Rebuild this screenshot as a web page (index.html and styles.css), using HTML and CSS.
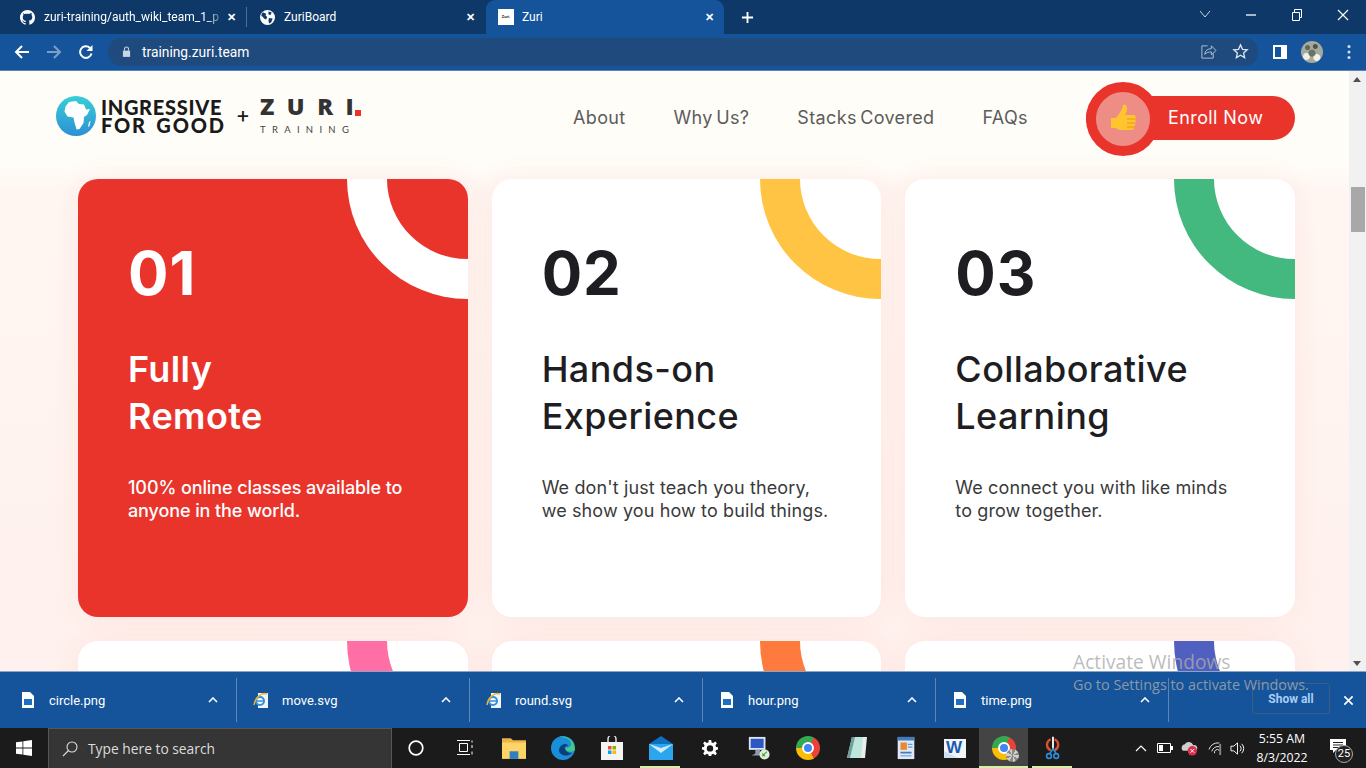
FILE: index.html
```html
<!DOCTYPE html>
<html lang="en">
<head>
    <meta charset="UTF-8">
    <meta name="viewport" content="width=device-width, initial-scale=1.0">
    <title>Zuri</title>
    <link rel="stylesheet" href="styles.css">
</head>
<body>
    <!-- tabs -->
    <div class="tabstrip">
        <div class="tab tab-first">
            <svg class="tab-icon" viewBox="0 0 16 16"><path fill="#fff" d="M8 0C3.58 0 0 3.58 0 8c0 3.54 2.29 6.53 5.47 7.59.4.07.55-.17.55-.38v-1.34c-2.23.48-2.7-1.07-2.7-1.07-.36-.92-.89-1.17-.89-1.17-.73-.5.05-.49.05-.49.8.06 1.23.83 1.23.83.72 1.22 1.87.87 2.33.66.07-.52.28-.87.51-1.07-1.78-.2-3.64-.89-3.64-3.95 0-.87.31-1.59.82-2.15-.08-.2-.36-1.02.08-2.12 0 0 .67-.21 2.2.82A7.7 7.7 0 0 1 8 3.87c.68 0 1.36.09 2 .27 1.53-1.04 2.2-.82 2.2-.82.44 1.1.16 1.92.08 2.12.51.56.82 1.27.82 2.15 0 3.07-1.87 3.75-3.65 3.95.29.25.54.73.54 1.48v2.2c0 .21.15.46.55.38A8 8 0 0 0 16 8c0-4.42-3.58-8-8-8z"/></svg>
            <span class="tab-title tab-title-fade">zuri-training/auth_wiki_team_1_p</span>
            <span class="tab-close">&#10005;</span>
        </div>
        <div class="tab">
            <svg class="tab-icon" viewBox="0 0 16 16"><circle cx="8" cy="8" r="8" fill="#fff"/><path fill="#0d3868" d="M3 2.500 6.500 4 6 6 7.800 7.500 6.500 10 5 9.700 2 6.500 1.300 7A6.800 6.800 0 0 1 3 2.500zM9 1.500l3.500 1.200L11 5.500 9 4.500zM9.500 8.500l4 .5L12 13l-2 1.500-1-2.500z"/></svg>
            <span class="tab-title">ZuriBoard</span>
            <span class="tab-close">&#10005;</span>
        </div>
        <div class="tab tab-active">
            <span class="favicon">Zuri.</span>
            <span class="tab-title">Zuri</span>
            <span class="tab-close">&#10005;</span>
        </div>
        <svg class="new-tab" viewBox="0 0 14 14"><path d="M7 1v12M1 7h12" stroke="#fff" stroke-width="2"/></svg>
        <div class="window-controls">
            <svg viewBox="0 0 46 20"><path d="M18 6l5 6 5-6" fill="none" stroke="#c4d2e4"/></svg>
            <svg viewBox="0 0 46 20"><path d="M18 10h10" stroke="#fff" stroke-width="1.300"/></svg>
            <svg viewBox="0 0 46 20"><path d="M18.500 7.500h7v8h-7zM20.500 7.500v-3h7v8h-2" fill="none" stroke="#fff"/></svg>
            <svg viewBox="0 0 46 20"><path d="M18 5l10 10M28 5L18 15" stroke="#fff" stroke-width="1.200"/></svg>
        </div>
    </div>

    <!-- address bar -->
    <div class="toolbar">
        <svg class="nav-btn" viewBox="0 0 16 16"><path d="M15 8H2M8 2L2 8l6 6" fill="none" stroke="#fff" stroke-width="2"/></svg>
        <svg class="nav-btn" viewBox="0 0 16 16"><path d="M1 8h13M8 2l6 6-6 6" fill="none" stroke="#7d9fc9" stroke-width="2"/></svg>
        <svg class="nav-btn" viewBox="0 0 16 16"><path d="M13.500 9.500A5.800 5.800 0 1 1 12 4" fill="none" stroke="#fff" stroke-width="2"/><path d="M14.500 1v6h-6z" fill="#fff"/></svg>
        <div class="omnibox">
            <svg class="lock" viewBox="0 0 10 12"><path fill="#c9d5e4" d="M1 5h8v7H1z"/><path d="M2.800 5V3.200a2.200 2.200 0 0 1 4.400 0V5" fill="none" stroke="#c9d5e4" stroke-width="1.200"/></svg>
            <span class="url">training.zuri.team</span>
            <svg class="omni-icon" viewBox="0 0 18 18"><path d="M8 3H2v13h12v-5" fill="none" stroke="#b4c4d8"/><path d="M5 12c.5-4 3-6 7-6V3l5 5-5 4.500V9.500c-3 0-5 .5-7 2.500z" fill="none" stroke="#b4c4d8"/></svg>
            <svg class="omni-icon" viewBox="0 0 18 18"><path d="M9 2l2.100 4.700 5 .5-3.800 3.300 1.100 5L9 13l-4.400 2.500 1.100-5L1.900 7.200l5-.5z" fill="none" stroke="#dbe4ef" stroke-width="1.400"/></svg>
        </div>
        <div class="toolbar-end">
            <svg class="side-panel" viewBox="0 0 14 14"><path fill="#fff" d="M0 0h14v14H0z"/><path fill="#15549b" d="M2 2h6v10H2z"/></svg>
            <span class="avatar"></span>
            <svg class="menu-dots" viewBox="0 0 4 16"><circle cx="2" cy="2.500" r="1.500"/><circle cx="2" cy="8" r="1.500"/><circle cx="2" cy="13.500" r="1.500"/></svg>
        </div>
    </div>

    <!-- page -->
    <div class="viewport">
        <div class="page">
            <header class="site-header">
                <div class="logo">
                    <svg class="globe" viewBox="0 0 40 40">
                        <defs><linearGradient id="globeFill" x1="0" y1="0" x2="0" y2="1"><stop offset="0" stop-color="#37cfd6"/><stop offset="1" stop-color="#2d8fd5"/></linearGradient></defs>
                        <circle cx="20" cy="20" r="20" fill="url(#globeFill)"/>
                        <path fill="#fff" d="M13 6l7-1 3 3 5 .5 2 5 4-.5-3 6-3 2-.5 6-4 6-3 .5-2-7-1-5-6-1-3-5 1-5z"/>
                        <path fill="#fff" d="M33 26l1.500-1-1 5-1.500 1z"/>
                    </svg>
                    <div class="logo-ingressive">
                        <span class="ig-top">INGRESSIVE</span>
                        <span class="ig-bottom">FOR GOOD</span>
                    </div>
                    <span class="logo-plus">+</span>
                    <div class="logo-zuri">
                        <div class="zuri-word">ZURI<span class="zuri-dot"></span></div>
                        <div class="zuri-sub">TRAINING</div>
                    </div>
                </div>
                <nav class="site-nav">
                    <a>About</a>
                    <a>Why Us?</a>
                    <a>Stacks Covered</a>
                    <a>FAQs</a>
                </nav>
                <a class="enroll">
                    <span class="enroll-thumb">
                        <svg viewBox="0 0 28 30"><path fill="#ffc42e" d="M2 14h5l3-4 3-5 1-4c2-1 4 0 4 3 0 3-1 5-2 7h9c2 0 2 3 1 4 1 1 1 3 0 4 1 1 0 3-1 3 .5 2-.5 4-2 4H12c-3 0-4-1-5-2H2z"/><path d="M18 15h8M18 19h8M18 23h7" stroke="#e89a10" stroke-width="1" fill="none"/></svg>
                    </span>
                    <span class="enroll-label">Enroll Now</span>
                </a>
            </header>

            <section class="cards">
                <article class="card card-red">
                    <span class="arc"></span>
                    <div class="card-num">01</div>
                    <h3>Fully<br>Remote</h3>
                    <p>100% online classes available to<br>anyone in the world.</p>
                </article>
                <article class="card card-yellow">
                    <span class="arc"></span>
                    <div class="card-num">02</div>
                    <h3>Hands-on<br>Experience</h3>
                    <p>We don't just teach you theory,<br>we show you how to build things.</p>
                </article>
                <article class="card card-green">
                    <span class="arc"></span>
                    <div class="card-num">03</div>
                    <h3>Collaborative<br>Learning</h3>
                    <p>We connect you with like minds<br>to grow together.</p>
                </article>
                <article class="card card-pink"><span class="arc"></span></article>
                <article class="card card-orange"><span class="arc"></span></article>
                <article class="card card-indigo"><span class="arc"></span></article>
            </section>
        </div>
        <div class="scrollbar">
            <span class="scroll-arrow scroll-up"></span>
            <span class="scroll-thumb"></span>
            <span class="scroll-arrow scroll-down"></span>
        </div>
    </div>

    <!-- downloads -->
    <div class="downloads">
        <div class="dl-item">
            <svg class="dl-icon" viewBox="0 0 12 16"><path fill="#fff" d="M0 0h8l4 4v12H0z"/><path fill="#1d6fc4" d="M2 7h8v6H2z"/></svg>
            <span class="dl-name">circle.png</span>
            <svg class="dl-caret" viewBox="0 0 10 6"><path d="M1 5l4-4 4 4" fill="none" stroke="#fff" stroke-width="1.600"/></svg>
        </div>
        <div class="dl-item">
            <svg class="dl-icon dl-icon-wide" viewBox="0 0 16 16"><path fill="#f2f5f9" d="M5 1h10v15H5z"/><circle cx="7" cy="9" r="4" fill="#fff" stroke="#2f8fdc" stroke-width="2"/><path d="M3.500 9h7" stroke="#2f8fdc" stroke-width="1.500"/><path d="M1 13C2 6 8 0 14 2" fill="none" stroke="#f0b429" stroke-width="1.500"/></svg>
            <span class="dl-name">move.svg</span>
            <svg class="dl-caret" viewBox="0 0 10 6"><path d="M1 5l4-4 4 4" fill="none" stroke="#fff" stroke-width="1.600"/></svg>
        </div>
        <div class="dl-item">
            <svg class="dl-icon dl-icon-wide" viewBox="0 0 16 16"><path fill="#f2f5f9" d="M5 1h10v15H5z"/><circle cx="7" cy="9" r="4" fill="#fff" stroke="#2f8fdc" stroke-width="2"/><path d="M3.500 9h7" stroke="#2f8fdc" stroke-width="1.500"/><path d="M1 13C2 6 8 0 14 2" fill="none" stroke="#f0b429" stroke-width="1.500"/></svg>
            <span class="dl-name">round.svg</span>
            <svg class="dl-caret" viewBox="0 0 10 6"><path d="M1 5l4-4 4 4" fill="none" stroke="#fff" stroke-width="1.600"/></svg>
        </div>
        <div class="dl-item">
            <svg class="dl-icon" viewBox="0 0 12 16"><path fill="#fff" d="M0 0h8l4 4v12H0z"/><path fill="#1d6fc4" d="M2 7h8v6H2z"/></svg>
            <span class="dl-name">hour.png</span>
            <svg class="dl-caret" viewBox="0 0 10 6"><path d="M1 5l4-4 4 4" fill="none" stroke="#fff" stroke-width="1.600"/></svg>
        </div>
        <div class="dl-item">
            <svg class="dl-icon" viewBox="0 0 12 16"><path fill="#fff" d="M0 0h8l4 4v12H0z"/><path fill="#1d6fc4" d="M2 7h8v6H2z"/></svg>
            <span class="dl-name">time.png</span>
            <svg class="dl-caret" viewBox="0 0 10 6"><path d="M1 5l4-4 4 4" fill="none" stroke="#fff" stroke-width="1.600"/></svg>
        </div>
        <div class="dl-end">
            <button class="show-all">Show all</button>
            <svg class="dl-close" viewBox="0 0 12 12"><path d="M1.500 1.500l9 9M10.500 1.500l-9 9" stroke="#fff" stroke-width="1.800"/></svg>
        </div>
    </div>

    <!-- windows taskbar -->
    <div class="taskbar">
        <div class="start">
            <svg viewBox="0 0 16 16"><path fill="#fff" d="M0 2.300l6.500-.9v6.200H0zM7.300 1.300L16 0v7.600H7.300zM0 8.400h6.500v6.200L0 13.700zM7.300 8.400H16V16l-8.700-1.300z"/></svg>
        </div>
        <div class="searchbox">
            <svg viewBox="0 0 16 16"><circle cx="10" cy="6" r="5" fill="none" stroke="#ddd" stroke-width="1.100"/><path d="M6.500 9.500L1 15" stroke="#ddd" stroke-width="1.100"/></svg>
            <span>Type here to search</span>
        </div>
        <div class="task-icons">
            <span class="task"><svg viewBox="0 0 16 16"><circle cx="8" cy="8" r="6.800" fill="none" stroke="#fff" stroke-width="1.700"/></svg></span>
            <span class="task"><svg viewBox="0 0 16 16"><path d="M2.500 3.500h8v8h-8zM0 .5h13M0 14.500h13M15 .5v2M15 5v3M15 11.500v3" fill="none" stroke="#fff"/></svg></span>
            <span class="task"><svg class="big" viewBox="0 0 22 20"><path fill="#e9b44c" d="M0 1h8l2 2h12v5H0z"/><path fill="#ffd467" d="M0 5h22v15H0z"/><path fill="#2f7fc4" d="M7 13h8v7H7z"/></svg></span>
            <span class="task"><svg class="big" viewBox="0 0 24 24"><circle cx="12" cy="12" r="12" fill="#1a8ed8"/><path fill="#45c98a" d="M24 14C24 4 16-1 8 1 15 1 21 4 20 9c-.5 2-3 3-6 3 1 4 7 5 10 2z"/><path fill="#0c3f79" d="M8 15c0-4 3-7 6-7 2 0 3 1 3 2-3 0-4 1-3 3 1 3 4 4 7 4-3 3-7 3-9 2-2-1-4-2-4-4z"/></svg></span>
            <span class="task"><svg class="big" viewBox="0 0 22 24"><path d="M7 7V3a4 4 0 0 1 8 0v4" fill="none" stroke="#ddd" stroke-width="1.500"/><path fill="#f4f4f4" d="M0 6h22v18H0z"/><path fill="#f25022" d="M7 10h3.500v3.500H7z"/><path fill="#7fba00" d="M11.500 10H15v3.500h-3.500z"/><path fill="#00a4ef" d="M7 14.500h3.500V18H7z"/><path fill="#ffb900" d="M11.500 14.500H15V18h-3.500z"/></svg></span>
            <span class="task task-running"><svg class="big" viewBox="0 0 24 24"><path fill="#0f6fc0" d="M0 8l12-8 12 8v5H0z"/><path fill="#2ba6ee" d="M0 8h24v16H0z"/><path fill="#cfeaf9" d="M0 8l12 9 12-9-12 4z"/></svg></span>
            <span class="task"><svg viewBox="0 0 20 20"><path fill="#fff" d="M8.500 0h3l.5 3 2 .8 2.500-1.800 2.100 2.100L16.800 6.600l.8 2 2.400.4v3l-2.400.5-.8 2 1.800 2.400-2.100 2.100-2.500-1.700-2 .8-.5 2.300h-3l-.5-2.300-2-.8-2.500 1.700-2.100-2.100 1.800-2.400-.8-2L0 12V9l2.400-.4.800-2L1.400 4.100l2.100-2.100L6 3.800 8 3zM10 6.500a4 4 0 1 0 0 8 4 4 0 0 0 0-8z" fill-rule="evenodd"/></svg></span>
            <span class="task"><svg class="big" viewBox="0 0 24 26"><path fill="#dbe6f5" d="M1 1h18v14H1z"/><path fill="#2c57c4" d="M3 3h14v10H3z"/><path fill="#8e9bb5" d="M8 15h5v4l5 2H4l4-2z"/><circle cx="18" cy="20" r="5.500" fill="#dff0d8"/><path d="M15.500 22l5-5M15.500 19l3 3" stroke="#47a04b" stroke-width="1.300"/></svg></span>
            <span class="task"><span class="chrome-logo"></span></span>
            <span class="task"><svg class="big" viewBox="0 0 22 24"><path fill="#e6efe9" d="M6 1h15l-2 21H3z"/><path fill="#bfe6dc" d="M6 1h11l-2 21H1z"/><path fill="#6f9f9a" d="M6 1h3L4 22H1z"/></svg></span>
            <span class="task"><svg class="big" viewBox="0 0 20 26"><path fill="#dfe8f4" d="M1 1h18v24H1z"/><path fill="#3e7cc4" d="M1 1h18v4H1zM4 17h12v2H4zM4 21h12v1H4z"/><path fill="#e9882f" d="M4 7h7v8H4z"/><path d="M12 9h5M12 12h5" stroke="#3e7cc4"/></svg></span>
            <span class="task"><svg class="big" viewBox="0 0 24 24"><path fill="#f2f6fb" d="M1 3h22v19H1z"/><path fill="#cfe0f3" d="M1 15l14 7H1z"/><text x="11" y="17" class="word-letter">W</text></svg></span>
            <span class="task task-active task-running"><span class="chrome-logo"><span class="chrome-badge"></span></span></span>
            <span class="task task-running"><svg class="big" viewBox="0 0 20 30"><path fill="none" stroke="#d9512c" stroke-width="3" d="M7 4C1 7 1 15 7 18M12 4c6 3 6 11 0 14"/><path stroke="#e8e8e8" stroke-width="2.500" d="M10 1v16"/><circle cx="5" cy="25" r="3" fill="none" stroke="#2a8fdc" stroke-width="2"/><circle cx="14" cy="25" r="3" fill="none" stroke="#2a8fdc" stroke-width="2"/><path d="M6 22l4-6 4 6" fill="none" stroke="#2a8fdc" stroke-width="2"/></svg></span>
        </div>
        <div class="tray">
            <svg class="tray-caret" viewBox="0 0 12 7"><path d="M1 6l5-5 5 5" fill="none" stroke="#fff" stroke-width="1.200"/></svg>
            <svg class="tray-battery" viewBox="0 0 16 10"><path d="M.500.500h13v9H.500z" fill="none" stroke="#fff"/><path fill="#fff" d="M2 2h4v6H2zM14 3h2v4h-2z"/></svg>
            <svg class="tray-cloud" viewBox="0 0 18 16"><path fill="#cfcfcf" d="M2 11a4 4 0 0 1 2-7 5 5 0 0 1 9 1 3 3 0 0 1 2 6z"/><circle cx="12" cy="11" r="5" fill="#d8304a"/><path d="M10 9l4 4M14 9l-4 4" stroke="#fff"/></svg>
            <svg class="tray-wifi" viewBox="0 0 16 16"><path d="M1 9a11 11 0 0 1 11-7M4 11a7 7 0 0 1 8-5M7 13a3 3 0 0 1 5-3" fill="none" stroke="#eee"/><path d="M12 15h2V3h-2z" fill="#888"/></svg>
            <svg class="tray-sound" viewBox="0 0 16 16"><path d="M1 5.500h3L8 2v12l-4-3.500H1z" fill="none" stroke="#fff"/><path d="M10.500 5a4 4 0 0 1 0 6M12.500 3a7 7 0 0 1 0 10" fill="none" stroke="#fff"/></svg>
            <div class="clock"><span>5:55 AM</span><span>8/3/2022</span></div>
            <div class="notify">
                <svg viewBox="0 0 16 14"><path fill="#fff" d="M0 0h16v11H6l-3 3v-3H0z"/><path d="M3 3.500h10M3 6h10M3 8.500h7" stroke="#222"/></svg>
                <span class="notify-badge">25</span>
            </div>
        </div>
    </div>

    <div class="activate">
        <div class="activate-title">Activate Windows</div>
        <div class="activate-sub">Go to Settings to activate Windows.</div>
    </div>
</body>
</html>
```

FILE: styles.css
```css
* {
    box-sizing: border-box;
}

html, body {
    height: 100%;
}

body {
    margin: 0;
    height: 768px;
    overflow: hidden;
    display: flex;
    flex-direction: column;
    font-family: "Roboto", "Liberation Sans", sans-serif;
    position: relative;
}

/* tab strip */
.tabstrip {
    height: 34px;
    flex: none;
    display: flex;
    align-items: stretch;
    padding-left: 8px;
    background: #0d3868;
    color: #fff;
}

.tab {
    width: 239px;
    display: flex;
    align-items: center;
    padding: 0 9px 0 13px;
    position: relative;
    font-size: 12px;
}

.tab-first {
    padding-left: 12px;
}

.tab-first::after {
    content: "";
    position: absolute;
    right: 0;
    top: 7px;
    bottom: 7px;
    width: 1px;
    background: #4d6f96;
}

.tab-active {
    width: 238px;
    padding-left: 12px;
    padding-right: 8px;
    background: #15549b;
    border-radius: 9px 9px 0 0;
}

.tab-icon {
    width: 15px;
    height: 15px;
    margin-right: 9px;
    flex: none;
}

.tab-title {
    flex: 1;
    white-space: nowrap;
}

.tab-title-fade {
    -webkit-mask-image: linear-gradient(to right, #000 88%, transparent 100%);
    mask-image: linear-gradient(to right, #000 88%, transparent 100%);
}

.tab-close {
    font-size: 11px;
    font-weight: 700;
    width: 11px;
    flex: none;
}

.favicon {
    width: 16px;
    height: 16px;
    margin-right: 8px;
    flex: none;
    background: #fff;
    color: #222;
    font-size: 4px;
    line-height: 16px;
    font-weight: 700;
    text-align: center;
}

.new-tab {
    width: 13px;
    height: 13px;
    margin: 11px 0 0 17px;
    flex: none;
}

.window-controls {
    margin-left: auto;
    display: flex;
    align-items: flex-start;
}

.window-controls svg {
    width: 46px;
    height: 20px;
    margin-top: 5px;
}

/* toolbar */
.toolbar {
    height: 37px;
    flex: none;
    display: flex;
    align-items: center;
    padding: 4px 0 5px 14px;
    background: #15549b;
    border-bottom: 1px solid #5c84b3;
}

.nav-btn {
    width: 16px;
    height: 16px;
    margin-right: 16px;
    flex: none;
}

.omnibox {
    width: 1150px;
    height: 28px;
    margin-left: -2px;
    border-radius: 14px;
    background: #1f4a7d;
    display: flex;
    align-items: center;
    padding-left: 14px;
    padding-right: 9px;
    color: #fff;
}

.lock {
    width: 9px;
    height: 11px;
    margin-right: 11px;
}

.url {
    font-size: 13.800px;
    flex: 1;
}

.omni-icon {
    width: 17px;
    height: 17px;
    margin-left: 15px;
}

.toolbar-end {
    display: flex;
    align-items: center;
    margin-left: 15px;
}

.side-panel {
    width: 14px;
    height: 14px;
    margin-right: 14px;
}

.avatar {
    width: 22px;
    height: 22px;
    border-radius: 50%;
    margin-right: 24px;
    background:
        radial-gradient(circle at 30% 30%, #5d6657 0 2px, transparent 3px),
        radial-gradient(circle at 65% 25%, #4d5548 0 2px, transparent 3px),
        radial-gradient(circle at 50% 55%, #6a7263 0 3px, transparent 4px),
        radial-gradient(circle at 25% 70%, #f0f0ea 0 3px, transparent 4px),
        radial-gradient(circle at 72% 75%, #f0f0ea 0 3px, transparent 4px),
        #a5aa9f;
}

.menu-dots {
    width: 4px;
    height: 16px;
    fill: #d5e1f0;
}

/* page area */
.viewport {
    flex: none;
    height: 600px;
    display: flex;
    overflow: hidden;
}

.page {
    flex: 1;
    background: linear-gradient(#fffdf8 0, #fffdf8 94px, #fff6f2 118px, #fff1ed 100%);
}

.site-header {
    height: 94px;
    display: flex;
    align-items: center;
    padding: 0 54px 0 56px;
}

.logo {
    display: flex;
    align-items: center;
    width: 517px;
    margin-bottom: 5px;
    color: #1a1a1a;
    font-family: "Lato", sans-serif;
}

.globe {
    width: 40px;
    height: 40px;
    margin-right: 5px;
    flex: none;
}

.logo-ingressive {
    width: 125px;
    flex: none;
    display: flex;
    flex-direction: column;
    font-weight: 900;
    font-size: 20px;
    line-height: 18px;
    white-space: nowrap;
}

.ig-top {
    letter-spacing: .7px;
}

.ig-bottom {
    letter-spacing: 1.800px;
    word-spacing: 3px;
}

.logo-plus {
    width: 12px;
    flex: none;
    margin: 0 11px;
    font-family: "Roboto", sans-serif;
    font-size: 21px;
    line-height: 24px;
    text-align: center;
}

.zuri-word {
    display: flex;
    align-items: flex-end;
    height: 24px;
    padding-bottom: 3px;
    font-family: "Open Sans", sans-serif;
    font-weight: 800;
    font-size: 23.500px;
    line-height: 21px;
    letter-spacing: 12.500px;
    color: #333;
    white-space: nowrap;
}

.zuri-dot {
    width: 6px;
    height: 6px;
    margin-left: -11px;
    margin-bottom: 1px;
    background: #e9342c;
}

.zuri-sub {
    font-size: 9.500px;
    line-height: 12px;
    letter-spacing: 6.300px;
    color: #444;
    margin-top: 4px;
    white-space: nowrap;
}

.site-nav {
    display: flex;
    gap: 48px;
    margin-bottom: 1px;
    font-family: "Inter", sans-serif;
    font-size: 18px;
    letter-spacing: .35px;
    word-spacing: -2px;
    color: #5c5c5c;
}

.enroll {
    margin-left: auto;
    width: 209px;
    height: 44px;
    display: flex;
    align-items: center;
    position: relative;
    padding: 0 0 2px 82px;
    border-radius: 22px;
    background: #e9342c;
    color: #fff;
    font-family: "Inter", sans-serif;
    font-size: 18px;
    letter-spacing: .4px;
}

.enroll-thumb {
    position: absolute;
    left: 0;
    top: -14px;
    width: 74px;
    height: 74px;
    border-radius: 50%;
    border: 10px solid #e9342c;
    background: #ee8d86;
    display: flex;
    align-items: center;
    justify-content: center;
}

.enroll-thumb svg {
    width: 28px;
    height: 30px;
}

/* cards */
.cards {
    display: grid;
    grid-template-columns: repeat(3, 1fr);
    grid-auto-rows: 438px;
    gap: 24px;
    width: 1217px;
    margin: 14px 0 0 78px;
}

.card {
    position: relative;
    overflow: hidden;
    padding: 61px 50px 0;
    background: #fff;
    border-radius: 20px;
    box-shadow: 0 0 30px rgba(233, 52, 44, .07);
    color: #1d1d22;
    font-family: "Inter", sans-serif;
}

.arc {
    position: absolute;
    top: -120px;
    right: -120px;
    width: 241px;
    height: 240px;
    border-radius: 50%;
    border: 40px solid;
}

.card-red {
    background: #e9342c;
    color: #fff;
}

.card-red .arc { color: #fff; }
.card-yellow .arc { color: #ffc444; }
.card-green .arc { color: #43b97f; }
.card-pink .arc { color: #ff6fa5; }
.card-orange .arc { color: #ff7a3d; }
.card-indigo .arc { color: #5060c0; }

.card-num {
    font-size: 60px;
    font-weight: 700;
    line-height: 66px;
    letter-spacing: 1px;
}

.card h3 {
    margin: 40px 0 0;
    font-size: 36px;
    font-weight: 500;
    line-height: 47px;
    letter-spacing: .4px;
}

.card p {
    margin: 36px 0 0;
    font-size: 18px;
    line-height: 23px;
    letter-spacing: .12px;
    color: #3a3a3a;
}

.card-red h3 {
    font-weight: 600;
}

.card-red p {
    color: #fff;
    font-weight: 500;
    letter-spacing: -.1px;
}

.scrollbar {
    width: 17px;
    flex: none;
    position: relative;
    display: flex;
    flex-direction: column;
    background: #f1f1f1;
}

.scroll-arrow {
    position: absolute;
    left: 4px;
    width: 0;
    height: 0;
    border-left: 4px solid transparent;
    border-right: 4px solid transparent;
}

.scroll-up {
    top: 6px;
    border-bottom: 5px solid #505050;
}

.scroll-down {
    bottom: 5px;
    border-top: 5px solid #505050;
}

.scroll-thumb {
    width: 14px;
    height: 45px;
    margin: 116px 0 0 2px;
    background: #a8a8a8;
}

/* downloads bar */
.downloads {
    height: 57px;
    flex: none;
    display: flex;
    align-items: center;
    padding-left: 4px;
    background: #15549b;
    border-top: 1px solid #8aa5c6;
    color: #fff;
    font-size: 13px;
}

.dl-item {
    width: 233px;
    height: 44px;
    flex: none;
    display: flex;
    align-items: center;
    padding-left: 18px;
    border-right: 1px solid #5d86b6;
}

.dl-icon {
    width: 12px;
    height: 16px;
    margin-right: 15px;
    flex: none;
}

.dl-icon-wide {
    width: 16px;
    margin-left: -2px;
    margin-right: 13px;
}

.dl-name {
    flex: 1;
}

.dl-caret {
    width: 10px;
    height: 6px;
    margin-right: 18px;
}

.dl-end {
    flex: 1;
    display: flex;
    align-items: center;
    justify-content: flex-end;
    padding-right: 12px;
}

.show-all {
    width: 78px;
    height: 31px;
    margin: 0 13px 3px 0;
    background: transparent;
    border: 1px solid #3f5f82;
    border-radius: 3px;
    color: #a8cdf5;
    font-family: "Roboto", sans-serif;
    font-size: 12px;
    font-weight: 700;
}

.dl-close {
    width: 11px;
    height: 11px;
}

/* taskbar */
.taskbar {
    height: 40px;
    flex: none;
    display: flex;
    background: #1b1b1b;
    color: #fff;
}

.start {
    width: 48px;
    display: flex;
    align-items: center;
    justify-content: center;
}

.start svg {
    width: 16px;
    height: 16px;
}

.searchbox {
    width: 344px;
    display: flex;
    align-items: center;
    padding-left: 13px;
    background: #353535;
    border: 1px solid #575757;
    border-bottom: 0;
    color: #dcdcdc;
    font-family: "Open Sans", sans-serif;
    font-size: 13.800px;
}

.searchbox svg {
    width: 16px;
    height: 16px;
    margin-right: 10px;
}

.task-icons {
    display: flex;
    margin-left: -1px;
}

.task {
    width: 49px;
    display: flex;
    align-items: center;
    justify-content: center;
    position: relative;
}

.task svg {
    width: 16px;
    height: 16px;
}

.task svg.big {
    width: 24px;
    height: 24px;
}

.task-active {
    background: #444;
}

.task-running::after {
    content: "";
    position: absolute;
    left: 4px;
    right: 5px;
    bottom: 0;
    height: 2px;
    background: #d6efa4;
}

.task-active::after {
    left: 0;
    right: 0;
}

.chrome-logo {
    width: 24px;
    height: 24px;
    border-radius: 50%;
    position: relative;
    background: conic-gradient(from 30deg, #ea4335 0 120deg, #fbbc04 120deg 240deg, #34a853 240deg 360deg);
}

.chrome-logo::after {
    content: "";
    position: absolute;
    inset: 6px;
    border-radius: 50%;
    background: #4285f4;
    border: 2px solid #fff;
}

.chrome-badge {
    position: absolute;
    right: -3px;
    bottom: -2px;
    width: 13px;
    height: 13px;
    border-radius: 50%;
    background: repeating-conic-gradient(#8b8b85 0 30deg, #d0d0c8 30deg 60deg);
    z-index: 1;
}

.word-letter {
    font-family: "Liberation Sans", sans-serif;
    font-size: 17px;
    font-weight: 700;
    fill: #1d5bb0;
    text-anchor: middle;
}

.tray {
    margin-left: auto;
    display: flex;
    align-items: center;
    padding-right: 16px;
}

.tray svg {
    flex: none;
}

.tray-caret {
    width: 12px;
    height: 7px;
    margin-right: 10px;
}

.tray-battery {
    width: 16px;
    height: 10px;
    margin-right: 8px;
}

.tray-cloud {
    width: 17px;
    height: 16px;
    margin-right: 10px;
}

.tray-wifi {
    width: 15px;
    height: 15px;
    margin-right: 7px;
}

.tray-sound {
    width: 15px;
    height: 15px;
    margin-right: 6px;
}

.clock {
    width: 62px;
    display: flex;
    flex-direction: column;
    align-items: center;
    font-family: "Open Sans", sans-serif;
    font-size: 12.300px;
    line-height: 19px;
}

.notify {
    position: relative;
    margin-left: 17px;
    width: 20px;
    height: 24px;
}

.notify svg {
    width: 16px;
    height: 14px;
    margin-top: 3px;
    display: block;
}

.notify-badge {
    position: absolute;
    left: 5px;
    top: 9px;
    width: 18px;
    height: 18px;
    border-radius: 50%;
    border: 1px solid #aaa;
    background: #222;
    font-size: 11px;
    line-height: 16px;
    text-align: center;
}

/* watermark sits on top of everything */
.activate {
    position: absolute;
    left: 1073px;
    top: 650px;
    color: rgba(170, 170, 170, .8);
    font-family: "Open Sans", sans-serif;
    pointer-events: none;
}

.activate-title {
    font-size: 19.200px;
    line-height: 24px;
}

.activate-sub {
    font-size: 14.400px;
    line-height: 22px;
}
```
